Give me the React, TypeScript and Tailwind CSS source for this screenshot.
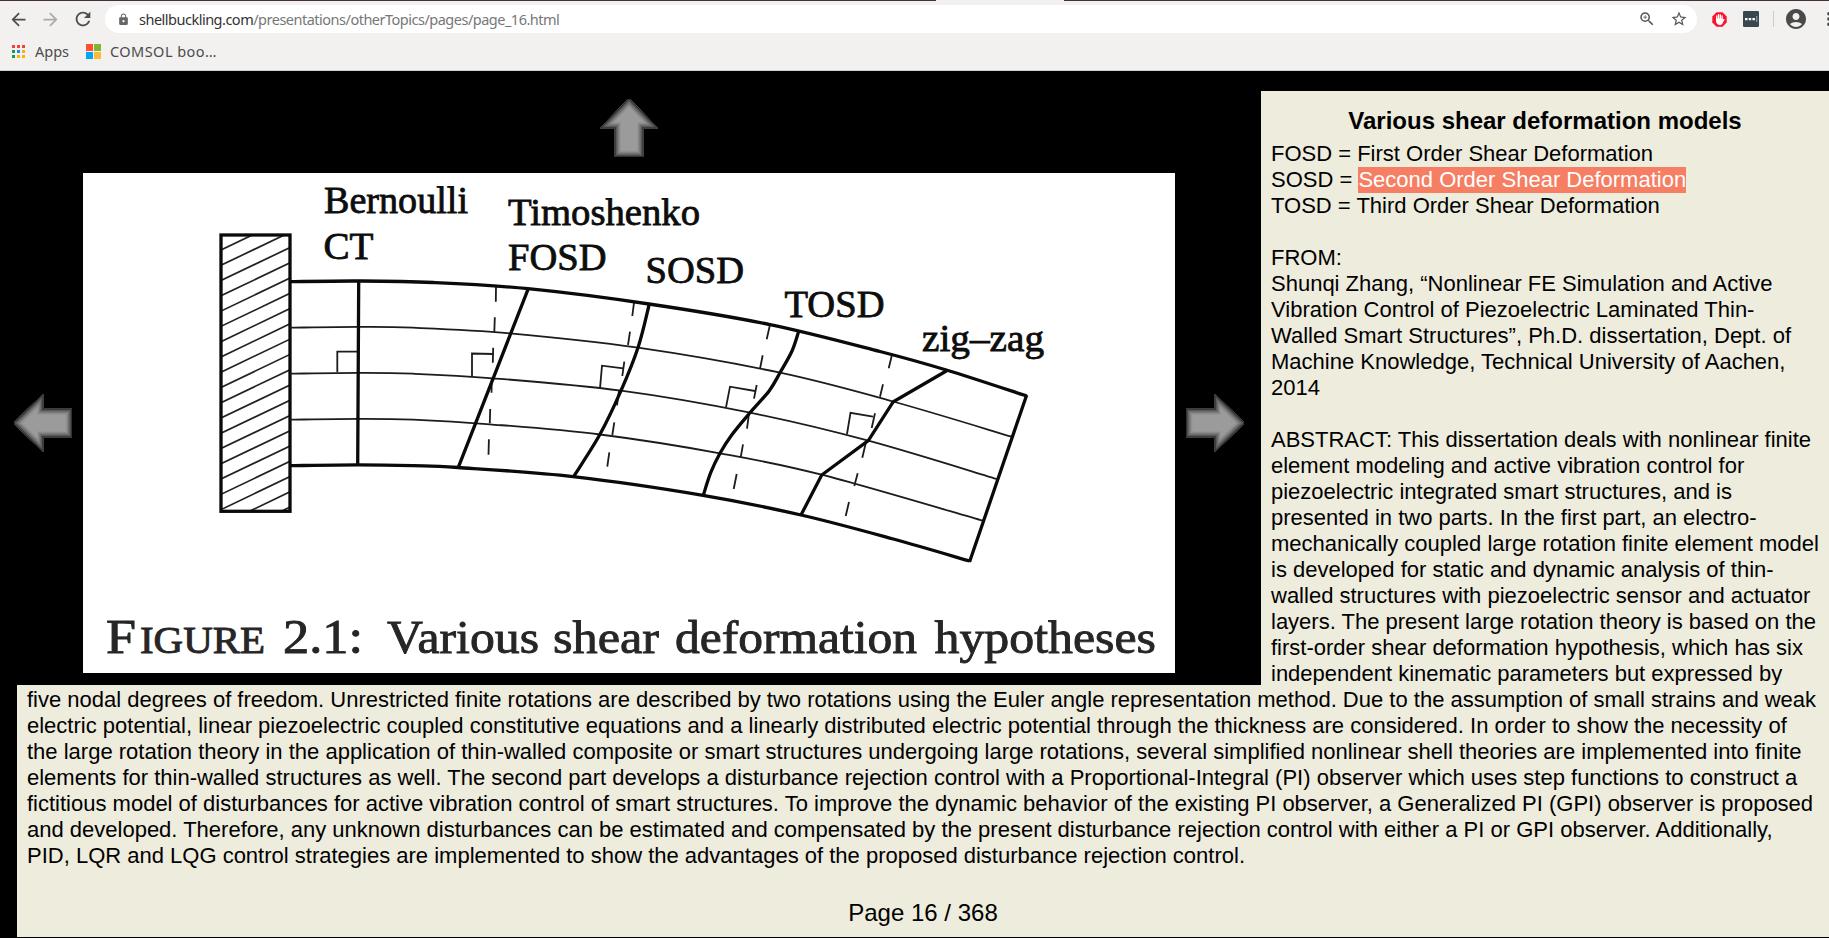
import React, { useId } from "react";
import {
  MdArrowBack,
  MdArrowForward,
  MdRefresh,
  MdLock,
  MdZoomIn,
  MdStarBorder,
  MdAccountCircle,
} from "react-icons/md";

type Point = [number, number];

// Catmull-Rom spline through the points, written as cubic segments.
function smooth(pts: Point[]): string {
  let d = `M${pts[0][0]} ${pts[0][1]}`;
  for (let i = 0; i < pts.length - 1; i++) {
    const p0 = pts[Math.max(i - 1, 0)];
    const p1 = pts[i];
    const p2 = pts[i + 1];
    const p3 = pts[Math.min(i + 2, pts.length - 1)];
    const k = 1 / 6;
    d += `C${p1[0] + (p2[0] - p0[0]) * k} ${p1[1] + (p2[1] - p0[1]) * k} ${p2[0] - (p3[0] - p1[0]) * k} ${p2[1] - (p3[1] - p1[1]) * k} ${p2[0]} ${p2[1]}`;
  }
  return d;
}

const topEdge: Point[] = [[290, 281.7], [358, 281], [433, 282.5], [528, 288.7], [649, 304], [770, 324.6], [880, 351.5], [948, 370.5], [1026.7, 396]];
const bottomEdge: Point[] = [[290, 465.7], [358, 464.9], [413, 465.7], [458, 467.5], [573, 476.6], [703, 495.3], [801, 515], [893.3, 539], [969.5, 561]];
const layers: Point[][] = [
  [[290, 327.7], [358, 326.9], [413, 327.7], [510, 333.3], [638, 347.7], [780, 372.7], [893, 401.5], [1011.7, 436.7]],
  [[290, 373.7], [358, 372.9], [413, 373.7], [493, 378.3], [621, 390.7], [750, 412.7], [868.3, 440.7], [996.7, 479]],
  [[290, 419.7], [358, 418.9], [413, 419.7], [490, 424.3], [600, 434.5], [720, 453.3], [821.5, 474.7], [982.7, 520.7]],
];
const sosd: Point[] = [[649.3, 304], [638.3, 346.7], [621, 390.7], [600, 434.3], [574, 476]];
const tosd: Point[] = [[798.7, 331.3], [792, 351], [780, 372.7], [769.3, 390.7], [750, 412.7], [731.7, 435], [720, 453.3], [710.7, 472.7], [703.3, 495.3]];

const dashes =
  "M496 286.7L495.8 301.7M494.8 317.3L494.3 332.3M493.2 347.7L492.8 362.7M491.8 378.3L491.5 392.7M490.2 409L489.8 423.3M488.9 439.3L488.5 454.7" +
  "M634 302.7L632.3 316M630 331.7L628 345M624.3 361.7L622.3 376M619 390.7L617 405.3M614.3 422.3L612.3 435M609.3 452.3L607.3 466.7" +
  "M769.7 326L766.7 339.3M762.7 355.3L760 368.7M756.7 385L754 398.7M749 413.3L747 428.7M743 444.3L740.7 457.3M736.7 474L733.7 489" +
  "M891.7 356L888.7 368.3M883 384.3L880 396.7M875 413.3L871.7 428M865.7 443.3L862.3 457.7M857.7 473.3L854.3 486M849 502L845.7 516";

const hatch = Array.from({ length: 20 }, (_, k) => 250 + 15.27 * k);

const words: { t: string; x: number; y: number; w: number; s: number }[] = [
  { t: "Bernoulli", x: 324, y: 212.7, w: 144, s: 38 },
  { t: "CT", x: 323.5, y: 258.7, w: 50, s: 38 },
  { t: "Timoshenko", x: 508, y: 224.7, w: 192, s: 38 },
  { t: "FOSD", x: 508, y: 270.3, w: 98.5, s: 38 },
  { t: "SOSD", x: 645.5, y: 282.7, w: 98.5, s: 38 },
  { t: "TOSD", x: 784.5, y: 317.3, w: 100, s: 38 },
  { t: "zig–zag", x: 922, y: 350.7, w: 122, s: 38 },
];
const caption: { t: string; x: number; w: number; s: number }[] = [
  { t: "F", x: 106, w: 30, s: 48 },
  { t: "IGURE", x: 140, w: 125, s: 37 },
  { t: "2.1:", x: 283, w: 80, s: 48 },
  { t: "Various", x: 387, w: 152, s: 47 },
  { t: "shear", x: 553, w: 106, s: 47 },
  { t: "deformation", x: 675, w: 242, s: 47 },
  { t: "hypotheses", x: 934.5, w: 221.5, s: 47 },
];

function Figure() {
  return (
    <svg className="block h-[500px] w-[1092px] bg-white" viewBox="83 173 1092 500" fill="none" stroke="#0a0a0a">
      <defs>
        <clipPath id="wall"><rect x="221" y="235" width="69" height="276" /></clipPath>
      </defs>
      <g clipPath="url(#wall)" strokeWidth="1.7" stroke="#222">
        {hatch.map((y) => <path key={y} d={`M221 ${y}L290 ${y - 33}`} />)}
      </g>
      <rect x="221" y="235" width="69" height="276.3" strokeWidth="3.3" />
      <g strokeWidth="1.8" stroke="#1c1c1c">
        {layers.map((l, i) => <path key={i} d={smooth(l)} />)}
        <path d="M337.3 372V351.7H357.3M472 376.5V353.5L493.3 354M600 388.3L602 365.7L623.3 368.3M726 407.3L730 386.7L755 391M847 434L850.5 412.8L873 416.7" />
        <path d={dashes} />
      </g>
      <g strokeWidth="3.3">
        <path d={smooth(topEdge)} />
        <path d={smooth(bottomEdge)} />
        <path d="M1026.7 395L969.5 562M358.7 281L357.7 465M528.3 288.7L458.3 467.3" />
        <path d={smooth(sosd)} />
        <path d={smooth(tosd)} />
        <path d="M946.7 370.7L893.3 401.7L868.3 440.7L821.7 475L801 515" />
      </g>
      <g fill="#0d0d0d" stroke="#0d0d0d" strokeWidth="0.8" fontFamily="'Liberation Serif', serif">
        {words.map((w) => (
          <text key={w.t} x={w.x} y={w.y} fontSize={w.s} textLength={w.w} lengthAdjust="spacingAndGlyphs">{w.t}</text>
        ))}
      </g>
      <g fill="#262626" stroke="#262626" strokeWidth="0.9" fontFamily="'Liberation Serif', serif">
        {caption.map((w) => (
          <text key={w.t} x={w.x} y={652.7} fontSize={w.s} textLength={w.w} lengthAdjust="spacingAndGlyphs">{w.t}</text>
        ))}
      </g>
    </svg>
  );
}

const bevel: [number, string][] = [
  [13, "#959595"],
  [11, "#8a8a8a"],
  [9, "#7b7b7b"],
  [7, "#6b6b6b"],
  [5, "#595959"],
  [3, "#434343"],
  [1.4, "#2a2a2a"],
];

function NavArrow({ className }: { className?: string }) {
  const id = useId();
  const d = "M29 -1L58.500 29.500H43.500V58H14.500V29.500H-.5Z";
  return (
    <svg className={`block size-[58px] shrink-0 ${className ?? ""}`} viewBox="0 0 58 58">
      <clipPath id={id}><path d={d} /></clipPath>
      <g clipPath={`url(#${id})`}>
        <path d={d} fill="#9b9b9b" />
        {bevel.map(([w, c]) => <path key={w} d={d} fill="none" stroke={c} strokeWidth={w} />)}
      </g>
    </svg>
  );
}

function AppsIcon() {
  const c = ["#f44336", "#f44336", "#f44336", "#0f9d58", "#1e88e5", "#ffa726", "#0f9d58", "#ffb300", "#ffb300"];
  return (
    <svg className="block size-[13px]" viewBox="0 0 13 13">
      {c.map((f, i) => <rect key={i} x={(i % 3) * 5} y={Math.floor(i / 3) * 5} width="3" height="3" fill={f} />)}
    </svg>
  );
}

function Toolbar() {
  return (
    <header className="flex h-[71px] flex-col border-b border-[#cdd2cf] bg-[#f2f1f0] font-['Noto_Sans',sans-serif]">
      <div className="flex h-[5px] flex-col bg-[#f6eff2]">
        <div className="flex h-px justify-between">
          <div className="w-[936px] bg-[#3c3436]" />
          <div className="w-[765px] bg-[#3c3436]" />
        </div>
        <div className="ml-[936px] h-1 w-[128px] bg-[#f2f1f0]" />
      </div>
      <div className="flex h-7 items-center">
        <MdArrowBack className="ml-2 size-[21px] text-[#4d4d4d]" />
        <MdArrowForward className="ml-[11px] size-[21px] text-[#aaaaaa]" />
        <MdRefresh className="ml-[11px] size-[22px] text-[#4d4d4d]" />
        <div className="ml-[11px] flex h-7 w-[1592px] items-center rounded-full bg-white pl-3">
          <MdLock className="size-[13px] text-[#666666]" />
          <span className="ml-[9px] text-[14.500px] leading-7 tracking-[-0.5px] whitespace-nowrap text-[#777777]">
            <span className="text-[#333333]">shellbuckling.com</span>/presentations/otherTopics/pages/page_16.html
          </span>
          <MdZoomIn className="ml-auto size-[18px] text-[#555555]" />
          <MdStarBorder className="mr-[9px] ml-[14px] size-[18px] text-[#555555]" />
        </div>
        <svg className="ml-[15px] block size-[15px]" viewBox="0 0 15 15">
          <path d="M4.5 .3h6l4.2 4.2v6l-4.2 4.2h-6L.3 10.500v-6z" fill="#f8152a" />
          <path d="M4.700 7.500V4M6.500 7V2.700M8.300 7V3M10.100 7.500V4" stroke="#fff" strokeWidth="1.3" strokeLinecap="round" />
          <path d="M4 6.500h6.800v1.300l1.200-1 .6.600-2.300 4.300q-.8 1.200-2.300 1.200Q4.600 12.900 4 9.500z" fill="#fff" />
        </svg>
        <svg className="ml-4 block size-4" viewBox="0 0 16 16">
          <rect width="16" height="16" rx="1.2" fill="#37474f" />
          <path d="M2 7h2.500v2.300H2zM5.700 7h2.500v2.300H5.700zM9.400 7h2.500v2.300H9.400z" fill="#fff" />
          <path d="M13.800 5v6" stroke="#a7b0b5" />
        </svg>
        <div className="ml-[14px] h-4 w-px bg-[#cccccc]" />
        <MdAccountCircle className="ml-[10px] size-6 shrink-0 text-[#4a4a4a]" />
        <svg className="ml-auto block h-[14px] w-[2px]" viewBox="0 0 2 14" fill="#4a4a4a">
          <circle cx="1.800" cy="1.800" r="1.700" /><circle cx="1.800" cy="7" r="1.700" /><circle cx="1.800" cy="12.200" r="1.700" />
        </svg>
      </div>
      <div className="flex h-[37px] items-center pl-3 text-[14.500px] text-[#4c4c4c]">
        <AppsIcon />
        <span className="ml-[10px] w-[51px]">Apps</span>
        <svg className="block size-[15px]" viewBox="0 0 15 15">
          <rect width="7" height="7" fill="#ff5030" /><rect x="8" width="7" height="7" fill="#80b630" />
          <rect y="8" width="7" height="7" fill="#00a8f0" /><rect x="8" y="8" width="7" height="7" fill="#ffb83a" />
        </svg>
        <span className="ml-[9px] tracking-[0.45px]">COMSOL boo…</span>
      </div>
    </header>
  );
}

const sideLines = [
  "TOSD = Third Order Shear Deformation",
  "",
  "FROM:",
  "Shunqi Zhang, “Nonlinear FE Simulation and Active",
  "Vibration Control of Piezoelectric Laminated Thin-",
  "Walled Smart Structures”, Ph.D. dissertation, Dept. of",
  "Machine Knowledge, Technical University of Aachen,",
  "2014",
  "",
  "ABSTRACT: This dissertation deals with nonlinear finite",
  "element modeling and active vibration control for",
  "piezoelectric integrated smart structures, and is",
  "presented in two parts. In the first part, an electro-",
  "mechanically coupled large rotation finite element model",
  "is developed for static and dynamic analysis of thin-",
  "walled structures with piezoelectric sensor and actuator",
  "layers. The present large rotation theory is based on the",
  "first-order shear deformation hypothesis, which has six",
  "independent kinematic parameters but expressed by",
];

const wideLines = [
  "five nodal degrees of freedom. Unrestricted finite rotations are described by two rotations using the Euler angle representation method. Due to the assumption of small strains and weak",
  "electric potential, linear piezoelectric coupled constitutive equations and a linearly distributed electric potential through the thickness are considered. In order to show the necessity of",
  "the large rotation theory in the application of thin-walled composite or smart structures undergoing large rotations, several simplified nonlinear shell theories are implemented into finite",
  "elements for thin-walled structures as well. The second part develops a disturbance rejection control with a Proportional-Integral (PI) observer which uses step functions to construct a",
  "fictitious model of disturbances for active vibration control of smart structures. To improve the dynamic behavior of the existing PI observer, a Generalized PI (GPI) observer is proposed",
  "and developed. Therefore, any unknown disturbances can be estimated and compensated by the present disturbance rejection control with either a PI or GPI observer. Additionally,",
  "PID, LQR and LQG control strategies are implemented to show the advantages of the proposed disturbance rejection control.",
];

export default function App() {
  return (
    <div className="flex h-[938px] w-[1829px] flex-col overflow-hidden bg-black">
      <Toolbar />
      <main className="flex flex-col font-['Liberation_Sans',sans-serif] text-[22px] leading-[26px] text-black">
        <div className="flex h-[614px]">
          <div className="flex w-[1261px] shrink-0 flex-col pt-7">
            <NavArrow className="ml-[600px]" />
            <div className="mt-4 flex items-center gap-[11px] pl-[14px]">
              <NavArrow className="-rotate-90" />
              <Figure />
              <NavArrow className="rotate-90" />
            </div>
          </div>
          <aside className="mt-5 flex-1 bg-[#eeecdd] pl-[10px] whitespace-nowrap">
            <h1 className="mt-4 mb-[7px] -ml-[10px] text-center text-[24px] leading-[27px] font-bold">Various shear deformation models</h1>
            <p>FOSD = First Order Shear Deformation</p>
            <p>SOSD = <span className="inline-block bg-[#f67e63] text-white">Second Order Shear Deformation</span></p>
            {sideLines.map((l, i) => <p key={i} className="h-[26px]">{l}</p>)}
          </aside>
        </div>
        <section className="ml-[17px] h-[252px] bg-[#eeecdd] pt-[2px] whitespace-nowrap">
          <div className="pl-[10px]">
            {wideLines.map((l, i) => <p key={i}>{l}</p>)}
          </div>
          <p className="mt-[30px] text-center text-[24px] leading-7">Page 16 / 368</p>
        </section>
      </main>
    </div>
  );
}
